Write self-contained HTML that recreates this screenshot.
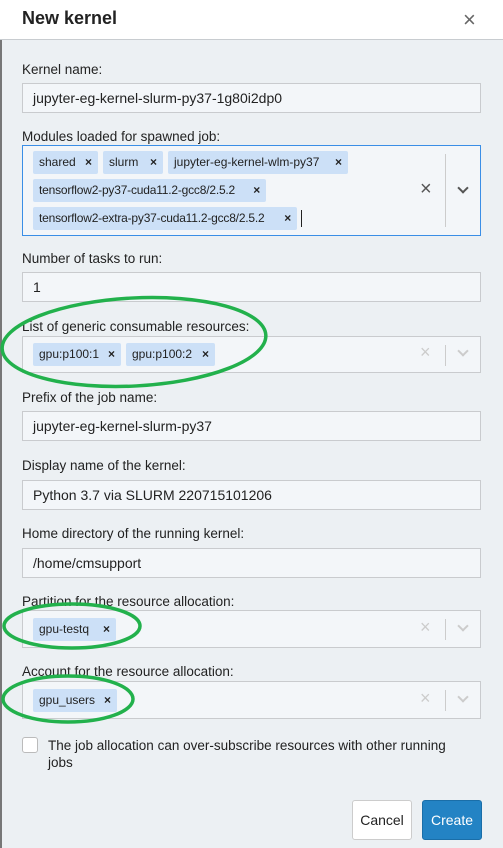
<!DOCTYPE html>
<html><head><style>
*{box-sizing:border-box;margin:0;padding:0}
body{width:503px;height:848px;overflow:hidden;background:#ecf0f3;font-family:"Liberation Sans",sans-serif;font-size:13.5px;color:#222;position:relative}
.a{position:absolute}
.hdr{left:0;top:0;width:503px;height:40px;background:#fff;border-bottom:1px solid #c8ccd0}
.lb{position:absolute;left:22px;font-size:13.5px;color:#222}
.in{position:absolute;left:22px;width:459px;height:30px;border:1px solid #c9cbce;background:#f3f6f9;padding-left:10px;line-height:28px;font-size:14px}
.sel{position:absolute;left:22px;width:459px;border:1px solid #c9cbce;background:#f3f6f9}
.tag{position:absolute;height:23px;background:#cce0f7;border-radius:2px;font-size:12px;line-height:23px;padding-left:6px;color:#222;white-space:nowrap}
.tag b{position:absolute;right:6px;top:0;font-size:12px}
.cx{position:absolute;color:#ccc;font-size:18px}
.sep{position:absolute;width:1px;background:#ccc}
.ch{position:absolute;width:8px;height:8px;border-right:2px solid #ccc;border-bottom:2px solid #ccc;transform:rotate(45deg)}
</style></head><body>
<div class="a hdr"></div>
<div class="a" style="left:0;top:40px;width:2px;height:808px;background:#777"></div>
<div class="a" style="left:22px;top:8px;font-size:18px;font-weight:bold;color:#222">New kernel</div>
<div class="a" style="left:463px;top:7px;font-size:22px;color:#666">×</div>

<div class="lb" style="top:62px">Kernel name:</div>
<div class="in" style="top:83px">jupyter-eg-kernel-slurm-py37-1g80i2dp0</div>

<div class="lb" style="top:129px">Modules loaded for spawned job:</div>
<div class="sel" style="top:145px;height:91px;border-color:#3a8ee6">
 <div class="tag" style="left:10px;top:5px;width:65px">shared<b>×</b></div>
 <div class="tag" style="left:80px;top:5px;width:60px">slurm<b>×</b></div>
 <div class="tag" style="left:145px;top:5px;width:180px">jupyter-eg-kernel-wlm-py37<b>×</b></div>
 <div class="tag" style="left:10px;top:33px;width:233px;letter-spacing:-0.2px">tensorflow2-py37-cuda11.2-gcc8/2.5.2<b>×</b></div>
 <div class="tag" style="left:10px;top:61px;width:264px;letter-spacing:-0.2px">tensorflow2-extra-py37-cuda11.2-gcc8/2.5.2<b>×</b></div>
 <div class="a" style="left:278px;top:64px;width:1px;height:17px;background:#222"></div>
 <div class="cx" style="left:397px;top:32px;color:#555;font-size:20px">×</div>
 <div class="sep" style="left:422px;top:8px;height:73px"></div>
 <div class="ch" style="left:436px;top:38px;border-color:#555"></div>
</div>

<div class="lb" style="top:251px">Number of tasks to run:</div>
<div class="in" style="top:272px">1</div>

<div class="lb" style="top:319px">List of generic consumable resources:</div>
<div class="sel" style="top:336px;height:37px">
 <div class="tag" style="left:10px;top:6px;width:88px">gpu:p100:1<b>×</b></div>
 <div class="tag" style="left:103px;top:6px;width:89px">gpu:p100:2<b>×</b></div>
 <div class="cx" style="left:397px;top:5px">×</div>
 <div class="sep" style="left:422px;top:8px;height:21px"></div>
 <div class="ch" style="left:436px;top:10px"></div>
</div>

<div class="lb" style="top:390px">Prefix of the job name:</div>
<div class="in" style="top:411px">jupyter-eg-kernel-slurm-py37</div>

<div class="lb" style="top:458px">Display name of the kernel:</div>
<div class="in" style="top:480px">Python 3.7 via SLURM 220715101206</div>

<div class="lb" style="top:526px">Home directory of the running kernel:</div>
<div class="in" style="top:548px">/home/cmsupport</div>

<div class="lb" style="top:594px">Partition for the resource allocation:</div>
<div class="sel" style="top:610px;height:38px">
 <div class="tag" style="left:10px;top:7px;width:83px">gpu-testq<b>×</b></div>
 <div class="cx" style="left:397px;top:6px">×</div>
 <div class="sep" style="left:422px;top:8px;height:21px"></div>
 <div class="ch" style="left:436px;top:11px"></div>
</div>

<div class="lb" style="top:664px">Account for the resource allocation:</div>
<div class="sel" style="top:681px;height:38px">
 <div class="tag" style="left:10px;top:7px;width:84px">gpu_users<b>×</b></div>
 <div class="cx" style="left:397px;top:6px">×</div>
 <div class="sep" style="left:422px;top:8px;height:21px"></div>
 <div class="ch" style="left:436px;top:11px"></div>
</div>

<div class="a" style="left:22px;top:737px;width:16px;height:16px;border:1px solid #bbb;border-radius:3px;background:#fff"></div>
<div class="a" style="left:48px;top:737px;width:420px;line-height:17px;font-size:13.5px">The job allocation can over-subscribe resources with other running jobs</div>

<div class="a" style="left:352px;top:800px;width:60px;height:40px;border:1px solid #ccc;border-radius:3px;background:#fff;text-align:center;line-height:38px;font-size:14px">Cancel</div>
<div class="a" style="left:422px;top:800px;width:60px;height:40px;border:1px solid #1a6ea8;border-radius:3px;background:#2383c4;color:#fff;text-align:center;line-height:38px;font-size:14px">Create</div>

<svg class="a" style="left:0;top:0" width="503" height="848">
 <g fill="none" stroke="#22b14c" stroke-width="3.5">
  <ellipse cx="134" cy="342" rx="132" ry="44" transform="rotate(-3 134 342)"/>
  <ellipse cx="72" cy="626" rx="68" ry="22"/>
  <ellipse cx="68" cy="699" rx="65" ry="23"/>
 </g>
</svg>
</body></html>
